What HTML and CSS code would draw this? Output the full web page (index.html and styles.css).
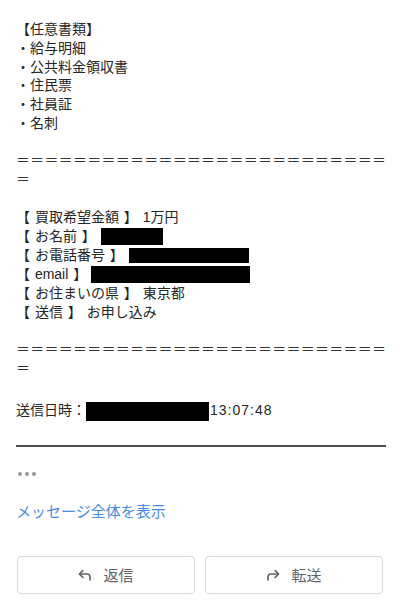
FILE: index.html
```html
<!DOCTYPE html>
<html lang="ja">
<head>
<meta charset="utf-8">
<title>メッセージ</title>
<link rel="stylesheet" href="styles.css">
</head>
<body>
<div class="page">
  <div class="mail">
    <p class="block">【任意書類】<br>・給与明細<br>・公共料金領収書<br>・住民票<br>・社員証<br>・名刺</p>
    <p class="block eq">＝＝＝＝＝＝＝＝＝＝＝＝＝＝＝＝＝＝＝＝＝＝＝＝＝＝＝</p>
    <div class="block data">
      <div class="row">【 買取希望金額 】 1万円</div>
      <div class="row">【 お名前 】 <span class="redact r-name"></span></div>
      <div class="row">【 お電話番号 】 <span class="redact r-tel"></span></div>
      <div class="row">【 email 】 <span class="redact r-mail"></span></div>
      <div class="row">【 お住まいの県 】 東京都</div>
      <div class="row">【 送信 】 お申し込み</div>
    </div>
    <p class="block eq">＝＝＝＝＝＝＝＝＝＝＝＝＝＝＝＝＝＝＝＝＝＝＝＝＝＝＝</p>
    <p class="sent">送信日時：<span class="redact r-date"></span><span class="time">13:07:48</span></p>
  </div>
  <div class="rule"></div>
  <div class="dots"><span></span><span></span><span></span></div>
  <a class="link" href="#">メッセージ全体を表示</a>
  <div class="actions">
    <button class="btn" type="button">
      <svg class="ico" width="14" height="12" viewBox="0 0 14 12" fill="none" stroke="#5f6368" stroke-width="1.6" stroke-linecap="round" stroke-linejoin="round"><path d="M4.8 1.6 1.4 5 4.8 8.4"/><path d="M1.6 5H9a3 3 0 0 1 3 3v3"/></svg>
      <span>返信</span>
    </button>
    <button class="btn" type="button">
      <svg class="ico" width="14" height="12" viewBox="0 0 14 12" fill="none" stroke="#5f6368" stroke-width="1.6" stroke-linecap="round" stroke-linejoin="round"><path d="M9.2 1.6 12.6 5 9.2 8.4"/><path d="M12.4 5H5a3 3 0 0 0-3 3v3"/></svg>
      <span>転送</span>
    </button>
  </div>
</div>
</body>
</html>
```

FILE: styles.css
```css
* { box-sizing: border-box; }
html, body { margin: 0; padding: 0; background: #fff; }
body {
  font-family: "Liberation Sans", "Noto Sans CJK JP", sans-serif;
  font-size: 14px;
  color: #262626;
}
.page {
  width: 396px;
  padding: 20px 8px 0 16px;
}
.mail { width: 372px; }
.block {
  margin: 0 0 18.75px 0;
  line-height: 18.75px;
}
.eq {
  word-break: break-all;
  letter-spacing: 0.24px;
  color: #333;
}
.data .row {
  line-height: 19px;
  height: 19px;
  white-space: nowrap;
  word-spacing: 1px;
}
.redact {
  display: inline-block;
  background: #000;
  vertical-align: middle;
}
.r-name { width: 62px; height: 17px; margin-left: 0; }
.r-tel { width: 120px; height: 15px; margin-left: 0; }
.r-mail { width: 159px; height: 17px; margin-left: -1px; }
.r-date { width: 123px; height: 19px; margin-left: 0; }
.sent {
  margin: 22px 0 0 0;
  line-height: 20px;
  height: 20px;
}
.time { letter-spacing: 1px; margin-left: 1px; }
.rule {
  margin-top: 25px;
  width: 370px;
  height: 2px;
  background: #4a4a4a;
}
.dots {
  margin-top: 25px;
  padding-left: 2px;
  display: flex;
  gap: 3px;
  height: 4px;
}
.dots span {
  width: 4px;
  height: 4px;
  border-radius: 50%;
  background: #9a9a9a;
}
.link {
  display: block;
  margin-top: 25px;
  line-height: 22px;
  font-size: 15px;
  color: #4a8be0;
  text-decoration: none;
}
.actions {
  margin-top: 33px;
  margin-left: 1px;
  width: 366px;
  display: grid;
  grid-template-columns: 1fr 1fr;
  gap: 10px;
}
.btn {
  height: 38px;
  border: 1px solid #dadce0;
  border-radius: 4px;
  background: #fff;
  display: flex;
  align-items: center;
  justify-content: center;
  gap: 11px;
  font-family: inherit;
  font-size: 15px;
  color: #5f6368;
  padding: 0;
}
.ico { display: block; }
```
